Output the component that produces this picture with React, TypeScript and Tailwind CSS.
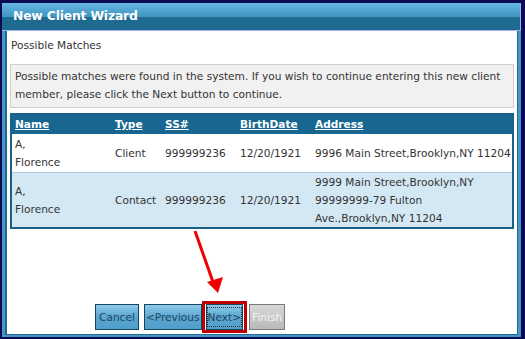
import React from "react";

const rows = [
  {
    name: ["A,", "Florence"],
    type: "Client",
    ssn: "999999236",
    birth: "12/20/1921",
    address: ["9996 Main Street,Brooklyn,NY 11204"],
    bg: "bg-white",
  },
  {
    name: ["A,", "Florence"],
    type: "Contact",
    ssn: "999999236",
    birth: "12/20/1921",
    address: ["9999 Main Street,Brooklyn,NY", "99999999-79 Fulton", "Ave.,Brooklyn,NY 11204"],
    bg: "bg-[#d3e8f3]",
  },
];

const cols = "grid grid-cols-[100px_50px_75px_75px_1fr]";

const WizardButton = ({ label, disabled, pad = "px-[3px]" }: { label: string; disabled?: boolean; pad?: string }) => (
  <button
    className={`h-[26px] ${pad} border text-[10.6px] leading-none ${
      disabled
        ? "border-[#7a7a7a] bg-gradient-to-b from-[#d8d8d8] to-[#b8b8b8] text-[#f4f4f4]"
        : "border-[#17435f] bg-gradient-to-b from-[#8ecbea] via-[#5aa6d0] to-[#4f9fcb] text-[#1f4660]"
    }`}
  >
    {label}
  </button>
);

export default function App() {
  return (
    <div
      className="w-[525px] h-[339px] bg-[#0b0b55] pt-[3px] pl-[2px] pr-[4px] pb-[2px] flex flex-col"
      style={{ fontFamily: "'DejaVu Sans', Verdana, sans-serif" }}
    >
      {/* title bar */}
      <div className="relative h-[28px] flex flex-col border-r border-b border-[#9fb4ee]">
        <div className="h-[14px] bg-gradient-to-b from-[#66b8e2] to-[#3f94c0]" />
        <div className="flex-1 bg-[#1f6a90]" />
        <div className="absolute inset-0 pl-[11px] flex items-center text-white font-bold text-[12.4px] tracking-[-0.2px]">
          New Client Wizard
        </div>
      </div>

      {/* body frame */}
      <div className="flex-1 flex bg-[#4a93c6] pl-[3px] pr-[3px] pb-[2px]">
        <div className="flex-1 relative bg-white border-l-2 border-r border-b border-[#1e6a90] px-[3px] text-[10.6px] text-[#333]">
          <div className="mt-[5px] mb-[10px] leading-[18px] pl-[1px]">Possible Matches</div>

          <div className="border border-[#cfcfcf] bg-[#f1f1f1] pl-[4px] pt-[2px] pb-[4px] leading-[18px]">
            Possible matches were found in the system. If you wish to continue entering this new client
            member, please click the Next button to continue.
          </div>

          <div className="mt-[5px] border-2 border-[#1a6088]">
            <div className={`${cols} bg-[#186790] h-[19px] items-center text-white font-bold underline`}>
              <div className="pl-[3px]">Name</div>
              <div className="pl-[3px]">Type</div>
              <div className="pl-[3px]">SS#</div>
              <div className="pl-[3px]">BirthDate</div>
              <div className="pl-[3px]">Address</div>
            </div>
            {rows.map((r, i) => (
              <div
                key={i}
                className={`${cols} ${r.bg} items-center leading-[18px] ${
                  i === 0 ? "py-[1px] border-b border-[#a9cbe0]" : "py-0"
                }`}
              >
                <div className="pl-[3px]">
                  {r.name.map((n) => (
                    <div key={n}>{n}</div>
                  ))}
                </div>
                <div className="pl-[3px]">{r.type}</div>
                <div className="pl-[3px]">{r.ssn}</div>
                <div className="pl-[3px]">{r.birth}</div>
                <div className="pl-[3px] whitespace-nowrap">
                  {r.address.map((a) => (
                    <div key={a}>{a}</div>
                  ))}
                </div>
              </div>
            ))}
          </div>

          {/* annotation arrow */}
          <svg className="absolute left-0 top-0 pointer-events-none" width="515" height="305">
            <line x1="188" y1="200" x2="206" y2="251" stroke="#ee0000" strokeWidth="3" />
            <polygon points="200,251 216,246 211,262" fill="#ee0000" />
          </svg>

          <div className="mt-[72px] flex items-center pl-[85px]">
            <WizardButton label="Cancel" />
            <div className="ml-[5px]">
              <WizardButton label="<Previous" pad="px-[1px]" />
            </div>
            <div className="border-[3px] border-[#c00000] px-[1px] flex items-center">
              <button className="h-[26px] px-0 border border-[#17435f] bg-gradient-to-b from-[#8ecbea] via-[#5aa6d0] to-[#4f9fcb] text-[10.6px] text-[#1f4660] leading-none">
                <span className="block border border-dotted border-[#333] py-[4px]">Next&gt;</span>
              </button>
            </div>
            <div className="ml-[2px]">
              <WizardButton label="Finish" disabled pad="px-[2px]" />
            </div>
          </div>
        </div>
      </div>
    </div>
  );
}
